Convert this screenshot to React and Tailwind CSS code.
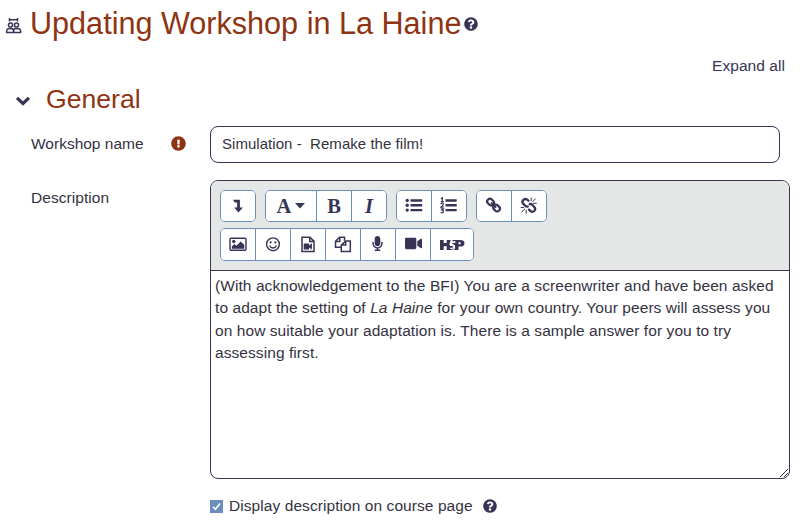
import React from 'react';
import { FaQuestionCircle, FaExclamationCircle, FaVideo, FaMicrophone } from 'react-icons/fa';

const BTN = 'flex h-full items-center justify-center border-[#6b8ebf] bg-white';

function Group({ className = '', children }) {
  return (
    <div className={`flex overflow-hidden rounded-[5px] border border-[#6b8ebf] bg-white ${className}`}>{children}</div>
  );
}

function Btn({ w = 'w-[35px]', last = false, children }) {
  return <button className={`${BTN} ${w} ${last ? '' : 'border-r'}`}>{children}</button>;
}

function Icon({ w = 18, h = 18, className = '', children }) {
  return (
    <svg width={w} height={h} viewBox={`0 0 ${w} ${h}`} fill="currentColor" className={`shrink-0 ${className}`}>
      {children}
    </svg>
  );
}

const WorkshopIcon = () => (
  <Icon w={17} h={17} className="mt-[3px]">
    <g fill="none" stroke="currentColor" strokeWidth="1.5">
      <path d="M4.500 2.700h8M4.500 1v3.400M12.500 1v3.400" />
      <circle cx="5.500" cy="7.900" r="2" />
      <circle cx="11.500" cy="7.900" r="2" />
      <path d="M1.700 15.400v-1.600q0-1.600 1.500-2l1-.5q1.200.8 2.400 0l.8.500q1 .4 1 2v1.600zM8.700 15.400v-1.600q0-1.600 1-2l.8-.5q1.200.8 2.400 0l1 .5q1.700.4 1.700 2v1.600z" />
    </g>
  </Icon>
);

const LevelDown = () => (
  <Icon>
    <path d="M4 2.700h6.900v7.700h3L9.500 15.400 5.100 10.400h3V5.600H5.700z" />
  </Icon>
);

const ListUl = () => (
  <Icon>
    <circle cx="2.200" cy="3.500" r="1.700" />
    <circle cx="2.200" cy="8.300" r="1.700" />
    <circle cx="2.200" cy="13.100" r="1.700" />
    <path d="M5.500 2.300h11.700v2.400H5.500zM5.500 7.100h11.700v2.400H5.500zM5.500 11.900h11.700v2.400H5.500z" />
  </Icon>
);

const ListOl = () => (
  <Icon>
    <path d="M5.500 2.300h11.200v2.400H5.500zM5.500 7.100h11.200v2.400H5.500zM5.500 11.900h11.200v2.400H5.500z" />
    <g fill="none" stroke="currentColor" strokeWidth="1.200">
      <path d="M.9 1.500l1.400-.8V4.700M.8 4.700h3" />
      <path d="M.8 7.100q.3-1 1.300-1 1.300 0 1.300 1Q3.400 8.000.9 10.100h2.900" />
      <path d="M.7 11.900h2.700L2.100 13.400q1.500 0 1.500 1.200 0 1.200-1.500 1.200-1 0-1.500-.5" />
    </g>
  </Icon>
);

const LinkIcon = () => (
  <Icon>
    <g fill="none" stroke="currentColor" strokeWidth="2.200">
      <rect x="-3.600" y="-2.700" width="7.200" height="5.400" rx="2.500" transform="translate(5.600 5.100) rotate(45)" />
      <rect x="-3.600" y="-2.700" width="7.200" height="5.400" rx="2.500" transform="translate(11.500 11) rotate(45)" />
      <path d="M6.700 6.200l3.800 3.800" strokeLinecap="round" />
    </g>
  </Icon>
);

const Unlink = () => (
  <Icon>
    <g fill="none" stroke="currentColor" strokeWidth="2.300" strokeLinecap="round">
      <path d="M8.400 3.700L6.900 2.400Q5.100 1.300 3.400 2.900 1.500 4.800 3.100 6.600l2.300 2.300Q6.500 9.900 7.700 9.500" />
      <path d="M9.700 7.100q1.400-.4 2.500.7l2.300 2.400q1.600 2-.3 3.800-1.800 1.600-3.700.1L9 12.600" />
    </g>
    <g fill="none" stroke="currentColor" strokeWidth="1">
      <path d="M11.200.6v3.500M15.700 1.600l-3.200 3.200M16.700 6.300h-3.600M6.200 12.900v3.700M5 11.800l-3.600 3.500M4.100 10.500H.7" />
    </g>
  </Icon>
);

const ImageIcon = () => (
  <Icon>
    <rect x="1" y="2.200" width="16" height="12" rx="1" fill="none" stroke="currentColor" strokeWidth="1.400" />
    <circle cx="4.800" cy="5.500" r="1.700" />
    <path d="M2.800 12.800v-2.400l2.500-2.300 2 1.700 4.400-4.200L15.300 9v3.800z" />
  </Icon>
);

const Smile = () => (
  <Icon>
    <circle cx="9" cy="8.300" r="6.400" fill="none" stroke="currentColor" strokeWidth="1.400" />
    <circle cx="6.700" cy="6.300" r="1.100" />
    <circle cx="11.300" cy="6.300" r="1.100" />
    <path d="M5.500 9.600q1 2.400 3.500 2.400t3.500-2.400" fill="none" stroke="currentColor" strokeWidth="1.300" />
  </Icon>
);

const FileVideo = () => (
  <Icon>
    <path d="M3 1.200h8l4 4v10.300H3zM10.800 1.200v4.200H15" fill="none" stroke="currentColor" strokeWidth="1.500" />
    <path d="M4.700 7.500h5.300v1.900l2.900-2.200v6.300L10 11.400v2H4.700z" />
  </Icon>
);

const CopyIcon = () => (
  <Icon>
    <g fill="none" stroke="currentColor" strokeWidth="1.500">
      <path d="M7.300 11.200H1.500V5.200L5.600 1.200h4.900v3.500M5.800 1.200v4.200H1.500" />
      <path d="M11.700 4.900h4.600v10.600H7.300V9.100zM11.700 4.900v4.200H7.300" />
    </g>
  </Icon>
);

const H5PIcon = () => (
  <Icon w={25} h={14}>
    <path d="M0 2h3.700v3.100h3V2h4L9.200 7H11q2.700-.8 2.800 1.800Q13.800 12 11 12H6.700V8.300h-3V12H0z" />
    <path d="M12.500 2H20q4.500 0 4.500 3.200 0 3.400-4.500 3.400h-1.500V12h-4.800q1.500-1 1.500-3.200 0-2.600-2.900-2.900l.3-1.100h2.900V3.200h-3z" />
    <path d="M18.500 4.200h1.300q1 0 1 1t-1 1h-1.300z" fill="#fff" />
    <path d="M15 4.200H11.200l-.7 3.300q3-.5 3 1.300 0 2-3.500 1.400" fill="none" stroke="#fff" strokeWidth="1.100" />
  </Icon>
);

const LETTER = "font-['Liberation_Serif',serif] text-[20.500px] font-bold leading-none";

export default function App() {
  return (
    <main className="h-[522px] w-[805px] overflow-hidden bg-white font-['Liberation_Sans',Arial,sans-serif] text-[15px] text-[#373455]">
      <header className="flex h-[48px] items-center pl-[5px]">
        <WorkshopIcon />
        <h1 className="-mt-px ml-[8px] whitespace-nowrap text-[30.6px] leading-none text-[#8f3413]">
          Updating Workshop in La Haine
        </h1>
        <FaQuestionCircle size={14} className="ml-[3px]" />
      </header>

      <div className="flex h-[36px] items-center justify-end pr-[20px] text-[15.5px] tracking-[0.06px]">
        <a>Expand all</a>
      </div>

      <div className="flex h-[30px] items-center pl-[15px]">
        <Icon w={16} h={12} className="mt-[4px]">
          <path d="M2 2.800l6 5.700 6-5.700" fill="none" stroke="currentColor" strokeWidth="3.200" />
        </Icon>
        <h2 className="ml-[15px] text-[26.6px] leading-none text-[#8f3413]">General</h2>
      </div>

      <div className="mt-[12px] flex h-[37px] pl-[31px] text-[#35323f]">
        <div className="flex h-[36px] w-[179px] items-center text-[15.5px]">
          <label className="w-[140px]">Workshop name</label>
          <FaExclamationCircle size={15} className="-mt-px text-[#8f3413]" />
        </div>
        <div className="flex w-[570px] items-center whitespace-pre rounded-[8px] border border-[#373455] pl-[11px] tracking-[0.04px]">
          {'Simulation -  Remake the film!'}
        </div>
      </div>

      <div className="mt-[17px] flex pl-[31px]">
        <label className="w-[179px] pt-[6px] text-[15.5px] tracking-[0.06px] text-[#35323f]">Description</label>
        <div className="relative h-[299px] w-[580px] overflow-hidden rounded-[8px] border border-[#373455]">
          <div className="flex h-[90px] flex-col gap-[6px] border-b border-[#373455] bg-[#e5e7e6] pl-[9px] pt-[9px]">
            <div className="flex h-[32px] gap-[9px]">
              <Group>
                <Btn w="w-[34px]" last><LevelDown /></Btn>
              </Group>
              <Group>
                <Btn w="w-[51px]">
                  <span className={LETTER}>A</span>
                  <Icon w={10} h={6} className="ml-[4px]"><path d="M0 0h10L5 5.500z" /></Icon>
                </Btn>
                <Btn>
                  <span className={LETTER}>B</span>
                </Btn>
                <Btn w="w-[34px]" last>
                  <span className={`${LETTER} italic`}>I</span>
                </Btn>
              </Group>
              <Group>
                <Btn><ListUl /></Btn>
                <Btn w="w-[34px]" last><ListOl /></Btn>
              </Group>
              <Group>
                <Btn><LinkIcon /></Btn>
                <Btn w="w-[34px]" last><Unlink /></Btn>
              </Group>
            </div>
            <div className="flex h-[33px]">
              <Group>
                <Btn><ImageIcon /></Btn>
                <Btn><Smile /></Btn>
                <Btn><FileVideo /></Btn>
                <Btn><CopyIcon /></Btn>
                <Btn><FaMicrophone size={15} className="-mt-[3px] -ml-[2px]" /></Btn>
                <Btn><FaVideo size={17} className="-mt-[2px]" /></Btn>
                <Btn w="w-[42px]" last><H5PIcon /></Btn>
              </Group>
            </div>
          </div>
          <div className="whitespace-nowrap pl-[4px] pt-[4px] text-[15.5px] leading-[22.3px] tracking-[0.072px] text-[#35323f]">
            <p>(With acknowledgement to the BFI) You are a screenwriter and have been asked</p>
            <p>to adapt the setting of <i>La Haine</i> for your own country. Your peers will assess you</p>
            <p>on how suitable your adaptation is. There is a sample answer for you to try</p>
            <p>assessing first.</p>
          </div>
          <Icon w={10} h={10} className="absolute bottom-0 right-0">
            <path d="M1 9L9 1M5 9l4-4" fill="none" stroke="currentColor" strokeWidth="1" />
          </Icon>
        </div>
      </div>

      <div className="mt-[17px] flex h-[20px] items-center pl-[210px] text-[15.5px]">
        <span className="flex size-[13px] items-center justify-center bg-[#6b8ebf]">
          <Icon w={11} h={11}><path d="M2 5.800l2.400 2.500L9 2.500" fill="none" stroke="#fff" strokeWidth="1.600" /></Icon>
        </span>
        <span className="ml-[6px] tracking-[0.072px] text-[#35323f]">Display description on course page</span>
        <FaQuestionCircle size={14} className="ml-[10px]" />
      </div>
    </main>
  );
}
